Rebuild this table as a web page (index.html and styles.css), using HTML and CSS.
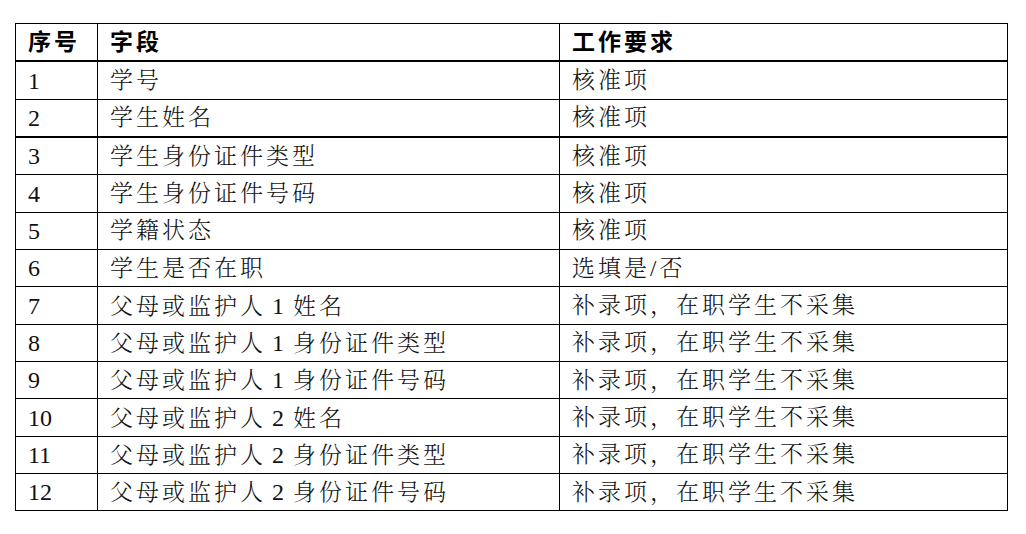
FILE: index.html
```html
<!DOCTYPE html>
<html lang="zh-CN">
<head>
<meta charset="utf-8">
<title>字段表</title>
<link rel="stylesheet" href="styles.css">
</head>
<body>
<table class="fields">
  <colgroup>
    <col class="c-no">
    <col class="c-field">
    <col class="c-req">
  </colgroup>
  <thead>
    <tr class="head"><th>序号</th><th>字段</th><th>工作要求</th></tr>
  </thead>
  <tbody>
    <tr><td class="num">1</td><td>学号</td><td>核准项</td></tr>
    <tr class="thick"><td class="num">2</td><td>学生姓名</td><td>核准项</td></tr>
    <tr><td class="num">3</td><td>学生身份证件类型</td><td>核准项</td></tr>
    <tr><td class="num">4</td><td>学生身份证件号码</td><td>核准项</td></tr>
    <tr><td class="num">5</td><td>学籍状态</td><td>核准项</td></tr>
    <tr><td class="num">6</td><td>学生是否在职</td><td>选填是/否</td></tr>
    <tr><td class="num">7</td><td>父母或监护人<span class="d">1</span>姓名</td><td>补录项，在职学生不采集</td></tr>
    <tr><td class="num">8</td><td>父母或监护人<span class="d">1</span>身份证件类型</td><td>补录项，在职学生不采集</td></tr>
    <tr><td class="num">9</td><td>父母或监护人<span class="d">1</span>身份证件号码</td><td>补录项，在职学生不采集</td></tr>
    <tr><td class="num">10</td><td>父母或监护人<span class="d">2</span>姓名</td><td>补录项，在职学生不采集</td></tr>
    <tr><td class="num">11</td><td>父母或监护人<span class="d">2</span>身份证件类型</td><td>补录项，在职学生不采集</td></tr>
    <tr><td class="num">12</td><td>父母或监护人<span class="d">2</span>身份证件号码</td><td>补录项，在职学生不采集</td></tr>
  </tbody>
</table>
</body>
</html>
```

FILE: styles.css
```css
html, body {
  background: #ffffff;
}
body {
  margin: 23px 0 0 15px;
  font-family: "Liberation Serif", "Noto Serif CJK SC", "Noto Sans CJK SC", serif;
  color: #111;
}
.fields {
  border-collapse: collapse;
  width: 992px;
  table-layout: fixed;
}
.c-no { width: 82px; }
.c-field { width: 462px; }
.c-req { width: 448px; }
.fields th,
.fields td {
  border: 1px solid #000;
  height: 36.35px;
  padding: 0 0 0 12px;
  text-align: left;
  vertical-align: middle;
  font-size: 23px;
  letter-spacing: 3px;
  white-space: nowrap;
  line-height: 1;
}
.fields td {
  font-weight: 300;
}
.fields td.num {
  font-size: 24px;
  letter-spacing: 0;
  font-weight: 400;
}
.fields .d {
  font-size: 24px;
  font-weight: 400;
  letter-spacing: 0;
  margin: 0 9px 0 6px;
}
.fields th {
  font-family: "Liberation Sans", "Noto Sans CJK SC", sans-serif;
  font-weight: 700;
  color: #000;
  border-bottom-width: 2px;
}
.fields tr.thick td {
  border-bottom-width: 2px;
}
```
